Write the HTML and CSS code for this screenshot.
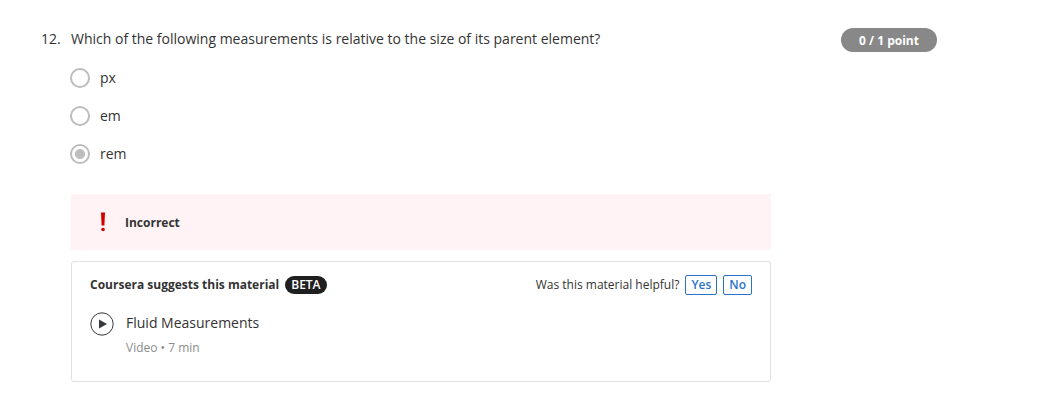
FILE: index.html
```html
<!DOCTYPE html>
<html lang="en">
<head>
<meta charset="utf-8">
<title>Quiz question</title>
<link rel="stylesheet" href="styles.css">
</head>
<body>
<main class="question">
  <span class="number">12.</span>
  <section class="body">
    <p class="prompt">Which of the following measurements is relative to the size of its parent element?</p>
    <ul class="options">
      <li class="option"><span class="radio"></span>px</li>
      <li class="option"><span class="radio"></span>em</li>
      <li class="option"><span class="radio radio-checked"></span>rem</li>
    </ul>
    <div class="feedback">
      <svg class="alert" width="6" height="20" viewBox="0 0 6 20"><path d="M1 .5h4L4.4 13.500H1.600z"/><circle cx="3" cy="17.500" r="1.800"/></svg>
      <strong class="verdict">Incorrect</strong>
    </div>
    <div class="card">
      <div class="card-head">
        <strong class="card-title">Coursera suggests this material</strong>
        <span class="beta">BETA</span>
        <span class="helpful">Was this material helpful?</span>
        <button class="vote">Yes</button>
        <button class="vote">No</button>
      </div>
      <div class="material">
        <svg class="play" width="24" height="24" viewBox="0 0 24 24"><circle cx="12" cy="12" r="11.200"/><path d="M9 7.500v9l8-4.500z"/></svg>
        <div>
          <div class="name">Fluid Measurements</div>
          <div class="meta">Video • 7 min</div>
        </div>
      </div>
    </div>
  </section>
  <span class="points">0 / 1 point</span>
</main>
</body>
</html>
```
FILE: styles.css
```css
* { box-sizing: border-box; }
body { margin: 0; background: #fff; color: #333; font: 14px/20px "Open Sans", sans-serif; }
.question { display: flex; align-items: flex-start; padding: 28px 0 0 41px; }
.number { width: 30px; line-height: 22px; }
.body { width: 700px; }
.prompt { margin: 0; line-height: 22px; white-space: nowrap; }
.options { list-style: none; margin: 18px 0 0; padding: 0; display: grid; gap: 18px; }
.option { display: flex; align-items: center; height: 20px; }
.radio { width: 20px; height: 20px; margin: 0 10px 0 -1px; border: 2px solid #bdbdbd; border-radius: 50%; }
.radio-checked { background: radial-gradient(circle, #bdbdbd 4.6px, transparent 5.4px); }
.feedback { display: flex; align-items: center; height: 56px; margin-top: 30px; padding-left: 29px; background: #fff3f5; font-size: 12px; }
.alert { margin-right: 19px; fill: #d30001; }
.verdict { padding-top: 2px; }
.card { height: 121px; margin-top: 11px; padding: 13px 18px; border: 1px solid #e0e0e0; border-radius: 3px; }
.card-head { display: flex; align-items: center; height: 20px; font-size: 12px; }
.beta { height: 18px; margin-left: 6px; padding: 0 6px; border-radius: 9px; background: #1f1f1f; color: #fff; font-weight: 600; line-height: 18px; }
.helpful { margin-left: auto; }
.vote { height: 20px; margin-left: 6px; padding: 0 5px; border: 1px solid #2a73cc; border-radius: 2px; background: #fff; color: #2a73cc; font: 600 12px/18px "Open Sans", sans-serif; }
.material { display: flex; margin-top: 17px; }
.play { margin-right: 12px; fill: #373a3c; }
.play circle { fill: none; stroke: #373a3c; }
.name { line-height: 22px; }
.meta { margin-top: 4px; color: #8c8c8c; font-size: 12px; line-height: 20px; }
.points { width: 96px; height: 24px; padding-top: 1px; margin-left: 70px; border-radius: 12px; background: #888; color: #fff; font-size: 12px; font-weight: 700; line-height: 24px; text-align: center; }
```
